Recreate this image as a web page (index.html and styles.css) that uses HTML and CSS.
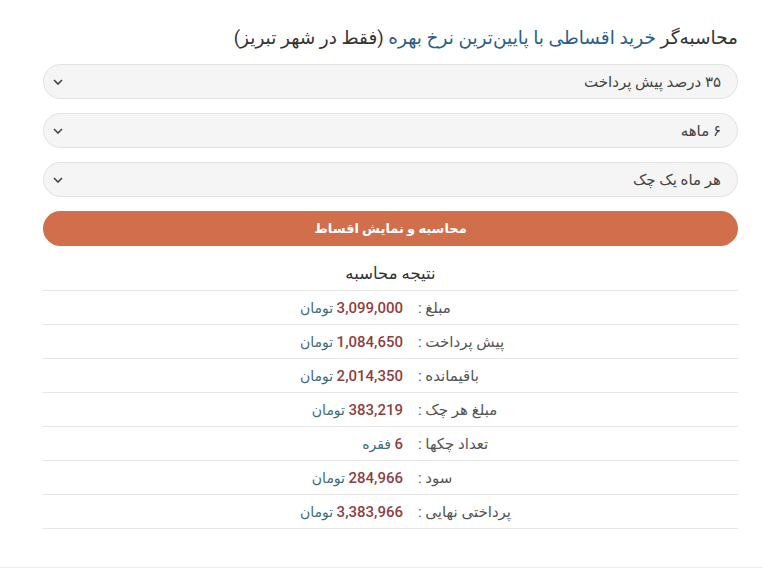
FILE: index.html
```html
<!DOCTYPE html>
<html lang="fa" dir="rtl">

<head>
    <meta charset="utf-8">
    <title>محاسبه‌گر اقساط</title>
    <link rel="stylesheet" href="styles.css">
</head>

<body>
    <div class="calc">
        <h2 class="calc-title">محاسبه‌گر <span class="accent">خرید اقساطی با پایین‌ترین نرخ بهره</span> (فقط در شهر تبریز)</h2>

        <div class="field">
            <span class="field-text">۳۵ درصد پیش پرداخت</span>
            <svg class="chevron" width="10" height="6" viewBox="0 0 10 6"><path d="M1 1l4 4 4-4" fill="none" stroke="#444" stroke-width="1.6"/></svg>
        </div>
        <div class="field">
            <span class="field-text">۶ ماهه</span>
            <svg class="chevron" width="10" height="6" viewBox="0 0 10 6"><path d="M1 1l4 4 4-4" fill="none" stroke="#444" stroke-width="1.6"/></svg>
        </div>
        <div class="field">
            <span class="field-text">هر ماه یک چک</span>
            <svg class="chevron" width="10" height="6" viewBox="0 0 10 6"><path d="M1 1l4 4 4-4" fill="none" stroke="#444" stroke-width="1.6"/></svg>
        </div>

        <button class="calc-btn">محاسبه و نمایش اقساط</button>

        <div class="result-title">نتیجه محاسبه</div>

        <div class="result">
            <div class="row"><span class="label">مبلغ :</span><span class="value"><b>3,099,000</b> تومان</span></div>
            <div class="row"><span class="label">پیش پرداخت :</span><span class="value"><b>1,084,650</b> تومان</span></div>
            <div class="row"><span class="label">باقیمانده :</span><span class="value"><b>2,014,350</b> تومان</span></div>
            <div class="row"><span class="label">مبلغ هر چک :</span><span class="value"><b>383,219</b> تومان</span></div>
            <div class="row"><span class="label">تعداد چکها :</span><span class="value"><b>6</b> فقره</span></div>
            <div class="row"><span class="label">سود :</span><span class="value"><b>284,966</b> تومان</span></div>
            <div class="row"><span class="label">پرداختی نهایی :</span><span class="value"><b>3,383,966</b> تومان</span></div>
        </div>
    </div>
    <div class="page-end"></div>
</body>

</html>
```

FILE: styles.css
```css
body {
    margin: 0;
    background-color: #ffffff;
    font-family: "Roboto", "DejaVu Sans", sans-serif;
    color: #444444;
}

.calc {
    width: 695px;
    margin: 0 25px 0 auto;
    padding-top: 28px;
    padding-bottom: 38px;
}

.calc-title {
    margin: 0 0 16px 0;
    line-height: 20px;
    font-size: 18.5px;
    font-weight: normal;
    color: #333333;
}

.accent {
    color: #2c5e8c; /* blue part of heading */
}

.field {
    display: flex;
    align-items: center;
    justify-content: space-between;
    height: 33px;
    margin-bottom: 14px;
    padding: 0 16px 0 9px;
    background-color: #f5f5f5;
    border: 1px solid #e2e2e2;
    border-radius: 18px;
    font-size: 15px;
    color: #444444;
}

.calc-btn {
    display: block;
    width: 100%;
    height: 35px;
    margin: 0;
    background-color: #d16e4c;
    color: #ffffff;
    border: none;
    border-radius: 18px;
    font-family: inherit;
    font-size: 13px;
    font-weight: bold;
}

.result-title {
    margin-top: 18px;
    line-height: 20px;
    padding-bottom: 6px;
    text-align: center;
    font-size: 16.5px;
    color: #333333;
    border-bottom: 1px solid #e6e6e6;
}

.row {
    display: grid;
    grid-template-columns: 326px 1fr;
    height: 33px;
    align-items: center;
    border-bottom: 1px solid #e6e6e6;
    font-size: 15px;
}

.label {
    text-align: left;
    padding-left: 6px;
    color: #555555;
}

.value {
    padding-right: 9px;
    font-size: 14px;
    color: #3f6b7a; /* unit text */
}

.value b {
    font-size: 15px;
    font-weight: 500;
    color: #8e3f3f; /* amount */
}

.page-end {
    border-bottom: 1px solid #ececec;
}
```
